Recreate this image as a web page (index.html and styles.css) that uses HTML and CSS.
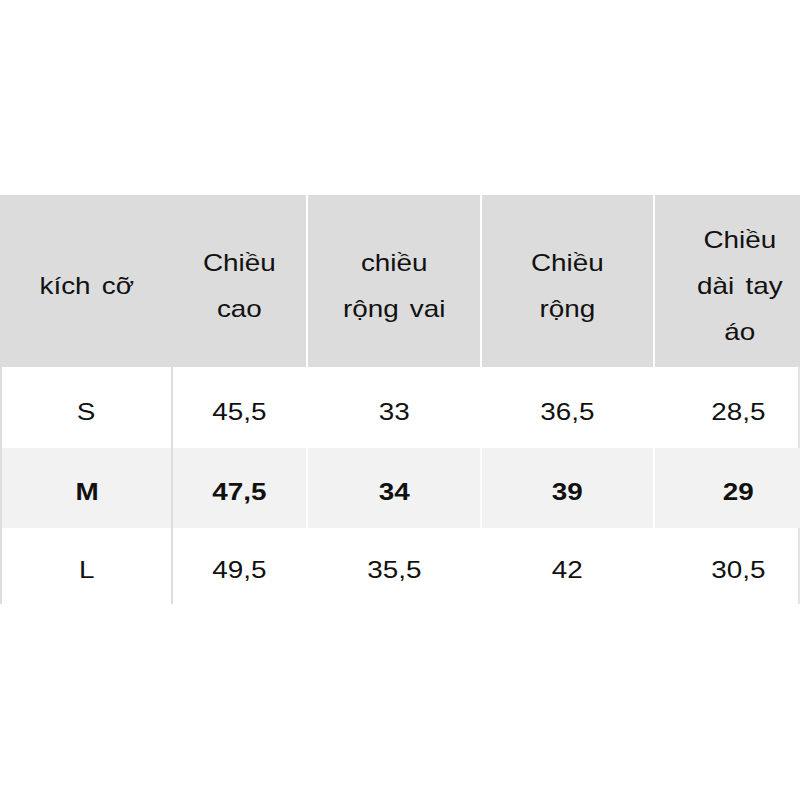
FILE: index.html
```html
<!DOCTYPE html>
<html lang="vi">
<head>
<meta charset="utf-8">
<title>Bảng kích cỡ</title>
<link rel="stylesheet" href="styles.css">
</head>
<body>
<div class="size-table">
  <div class="row head">
    <div class="cell c1"><span class="txt">kích cỡ</span></div>
    <div class="cell c2"><span class="txt">Chiều<br>cao</span></div>
    <div class="cell c3"><span class="txt">chiều<br>rộng vai</span></div>
    <div class="cell c4"><span class="txt">Chiều<br>rộng</span></div>
    <div class="cell c5"><span class="txt">Chiều<br>dài tay<br>áo</span></div>
  </div>
  <div class="row data r-s">
    <div class="cell c1"><span class="txt">S</span></div>
    <div class="cell c2"><span class="txt">45,5</span></div>
    <div class="cell c3"><span class="txt">33</span></div>
    <div class="cell c4"><span class="txt">36,5</span></div>
    <div class="cell c5"><span class="txt">28,5</span></div>
  </div>
  <div class="row data r-m alt">
    <div class="cell c1"><span class="txt">M</span></div>
    <div class="cell c2"><span class="txt">47,5</span></div>
    <div class="cell c3"><span class="txt">34</span></div>
    <div class="cell c4"><span class="txt">39</span></div>
    <div class="cell c5"><span class="txt">29</span></div>
  </div>
  <div class="row data r-l">
    <div class="cell c1"><span class="txt">L</span></div>
    <div class="cell c2"><span class="txt">49,5</span></div>
    <div class="cell c3"><span class="txt">35,5</span></div>
    <div class="cell c4"><span class="txt">42</span></div>
    <div class="cell c5"><span class="txt">30,5</span></div>
  </div>
</div>
</body>
</html>
```

FILE: styles.css
```css
html, body {
  margin: 0;
  padding: 0;
  background: #ffffff;
  overflow: hidden;
}

body {
  padding-top: 195px;
  font-family: "Liberation Sans", Arial, sans-serif;
  font-size: 24px;
  color: #111111;
}

.size-table {
  width: 800px;
}

.row {
  display: grid;
  grid-template-columns: 173px 135px 174px 173px 145px;
}

.cell {
  box-sizing: border-box;
  display: flex;
  align-items: center;
  justify-content: center;
  text-align: center;
}

.txt {
  display: inline-block;
  transform: scaleX(1.16);
  word-spacing: 3px;
}

.head {
  height: 172px;
  background: #dcdcdc;
}

.head .cell {
  line-height: 46px;
  padding-top: 10px;
}

.head .c2,
.head .c3,
.head .c4 {
  border-right: 2px solid #ffffff;
}

.head .c5 {
  padding-left: 24px;
}

.data .cell {
  padding-top: 8px;
  border-right: 2px solid #ffffff;
}

.data .c1 {
  border-left: 2px solid #dedede;
  border-right: 2px solid #dedede;
}

.data .c5 {
  padding-left: 24px;
  border-right: 2px solid #e4e4e4;
}

.r-s {
  height: 81px;
}

.r-m {
  height: 80px;
}

.r-l {
  height: 76px;
}

.alt {
  background: #f2f2f2;
  font-weight: bold;
}

.alt .c5 {
  border-right-color: #f2f2f2;
}
```
